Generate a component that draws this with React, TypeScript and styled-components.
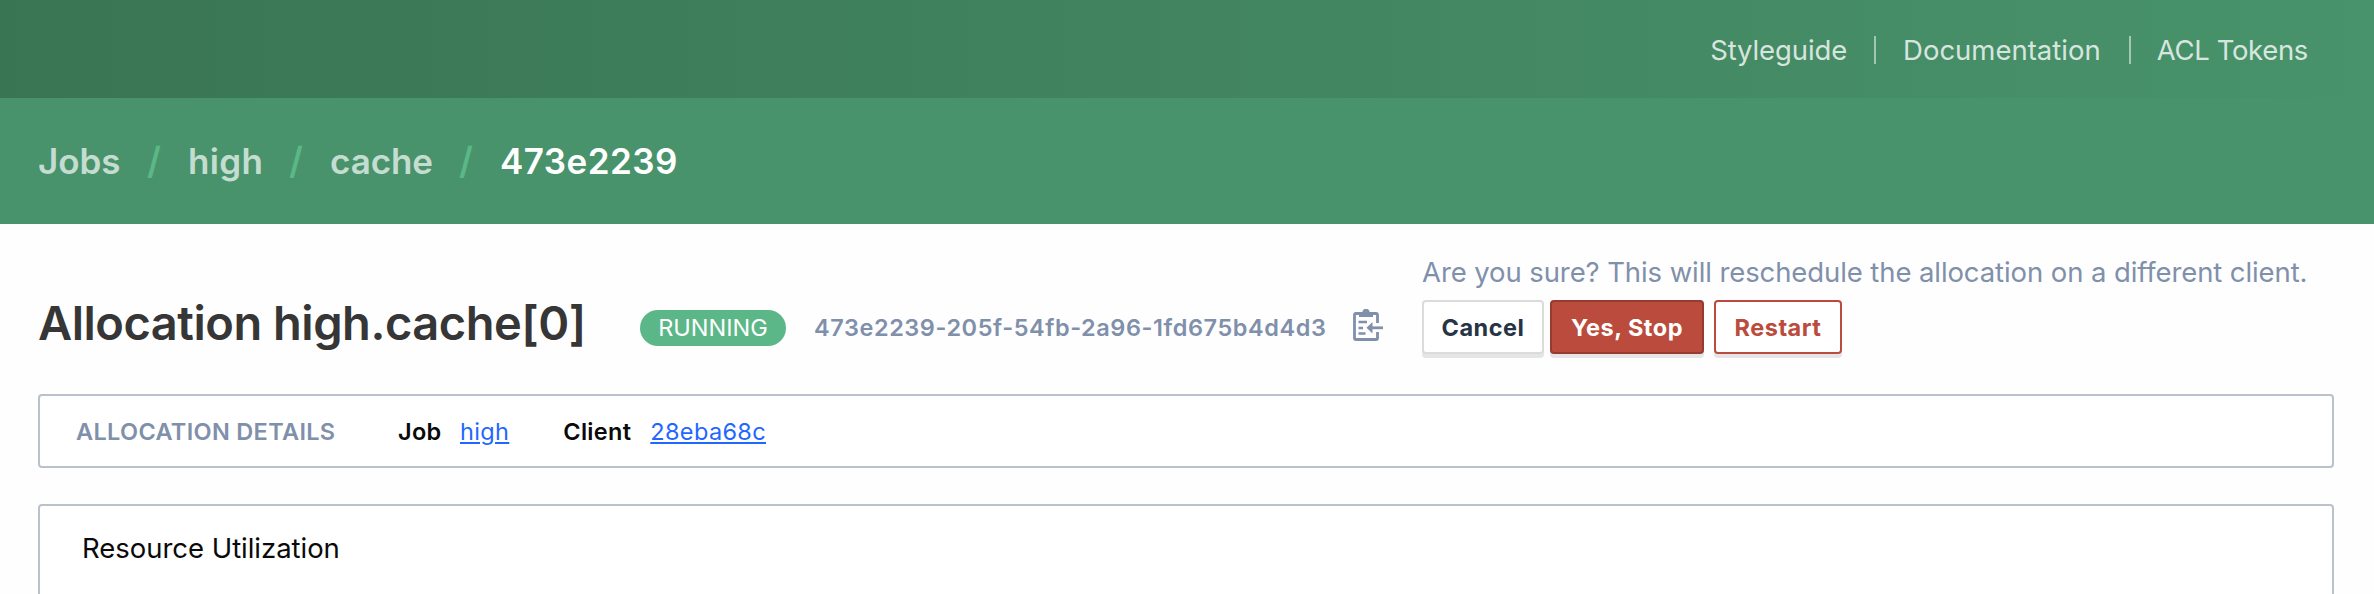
import React from "react";
import styled, { createGlobalStyle } from "styled-components";

const GlobalStyle = createGlobalStyle`
  *, *::before, *::after { box-sizing: border-box; }
  body {
    margin: 0;
    overflow: hidden;
    background: #fefefe;
    color: #0a0a0a;
    font-family: Inter, "Liberation Sans", sans-serif;
  }
  a { color: inherit; text-decoration: none; }
`;

const Page = styled.div`
  display: flex;
  flex-direction: column;
  height: 594px;
  overflow: hidden;
`;

const Navbar = styled.header`
  display: flex;
  flex: none;
  justify-content: flex-end;
  align-items: center;
  height: 98px;
  padding: 2px 66px 0 0;
  background: linear-gradient(to right, #3a7553, #48936b);
`;

const NavLink = styled.a<{ $tracking?: number }>`
  padding: 0 28px 0 27px;
  font-size: 27.5px;
  line-height: 34px;
  letter-spacing: ${(p) => p.$tracking ?? 0}px;
  color: rgba(255, 255, 255, 0.8);

  &:first-child { padding-right: 27px; }
  &:last-child { padding: 0 0 0 26px; }
`;

const NavDivider = styled.span`
  width: 2px;
  height: 28px;
  background: rgba(255, 255, 255, 0.5);
`;

const Breadcrumbs = styled.nav`
  display: flex;
  flex: none;
  align-items: center;
  height: 126px;
  padding-left: 38px;
  background: #48936b;
  font-size: 35px;
  font-weight: 600;
  line-height: 44px;
`;

const Crumb = styled.a<{ $width?: number; $current?: boolean; $tracking: number }>`
  flex: none;
  width: ${(p) => (p.$width ? `${p.$width}px` : "auto")};
  letter-spacing: ${(p) => p.$tracking}px;
  color: ${(p) => (p.$current ? "#ffffff" : "rgba(255, 255, 255, 0.7)")};
`;

const Slash = styled.span`
  flex: none;
  width: 41px;
  font-size: 37px;
  color: #5bb787;
`;

const Content = styled.main`
  display: flex;
  flex: none;
  flex-direction: column;
  padding: 32px 40px 0 38px;
`;

const TitleBar = styled.div`
  display: flex;
  align-items: flex-start;
  height: 138px;
`;

const Title = styled.h1`
  flex: none;
  width: 602px;
  margin: 37px 0 0;
  font-size: 47px;
  font-weight: 600;
  line-height: 60px;
  letter-spacing: -0.48px;
  color: #363636;
  white-space: nowrap;
`;

const Badge = styled.span`
  flex: none;
  width: 146px;
  height: 36px;
  margin-top: 54px;
  border-radius: 18px;
  background: #5bb787;
  color: #ffffff;
  font-size: 23.5px;
  line-height: 35px;
  text-align: center;
`;

const Hash = styled.span`
  flex: none;
  width: 539px;
  margin: 54px 0 0 28px;
  color: #8090ab;
  font-size: 23.5px;
  font-weight: 600;
  line-height: 36px;
  letter-spacing: 0.57px;
`;

const CopyIcon = styled.svg`
  flex: none;
  width: 30px;
  height: 32px;
  margin: 53px 39px 0 0;
`;

const Confirmation = styled.div`
  display: flex;
  flex-direction: column;
`;

const Prompt = styled.p`
  margin: 0;
  color: #8090ab;
  font-size: 27.5px;
  line-height: 32px;
  letter-spacing: -0.095px;
  white-space: nowrap;
`;

const Buttons = styled.div`
  display: flex;
  margin-top: 12px;
`;

type Tone = "plain" | "danger" | "dangerOutline";

const tones: Record<Tone, string> = {
  plain: "background: #ffffff; border-color: #dbdbdb; color: #263445;",
  danger: "background: #bb4b3d; border-color: #953b30; color: #ffffff;",
  dangerOutline: "background: #ffffff; border-color: #bb4b3d; color: #bb4b3d;",
};

const Button = styled.button<{ $tone: Tone; $width: number; $gap?: number }>`
  width: ${(p) => p.$width}px;
  height: 54px;
  margin: 0 ${(p) => p.$gap ?? 0}px 0 0;
  padding: 2px 0 0;
  border: 2px solid;
  border-radius: 4px;
  box-shadow: 0 4px 0 0 rgba(10, 10, 10, 0.1);
  font: 700 23.5px/48px Inter, "Liberation Sans", sans-serif;
  letter-spacing: 0.5px;
  white-space: nowrap;
  ${(p) => tones[p.$tone]}
`;

const Box = styled.section`
  border: 2px solid #bac1cc;
  border-radius: 4px;
  background: #ffffff;
`;

const DetailsBox = styled(Box)`
  display: flex;
  align-items: center;
  height: 74px;
  padding: 1px 0 0 36px;
  font-size: 23.5px;
  line-height: 34px;
`;

const DetailsHeading = styled.span`
  width: 322px;
  color: #8090ab;
  font-weight: 600;
  letter-spacing: 0.33px;
`;

const Term = styled.span<{ $width: number }>`
  width: ${(p) => p.$width}px;
  font-weight: 600;
  letter-spacing: 0.3px;
`;

const DetailLink = styled.a`
  color: #1f67ff;
  letter-spacing: 0.35px;
  text-decoration: underline;
  text-decoration-thickness: 2px;
  text-underline-offset: 2px;

  & + span { margin-left: 54px; }
`;

const UtilizationBox = styled(Box)`
  height: 300px;
  margin-top: 36px;
  padding: 25px 0 0 42px;
  font-size: 27.5px;
  line-height: 34px;
  letter-spacing: -0.03px;
`;

export default function App() {
  return (
    <Page>
      <GlobalStyle />
      <Navbar>
        <NavLink href="#" $tracking={-0.12}>Styleguide</NavLink>
        <NavDivider />
        <NavLink href="#" $tracking={0}>Documentation</NavLink>
        <NavDivider />
        <NavLink href="#" $tracking={-0.35}>ACL Tokens</NavLink>
      </Navbar>
      <Breadcrumbs>
        <Crumb href="#" $width={109} $tracking={-0.1}>Jobs</Crumb>
        <Slash>/</Slash>
        <Crumb href="#" $width={101} $tracking={0.3}>high</Crumb>
        <Slash>/</Slash>
        <Crumb href="#" $width={129} $tracking={-0.1}>cache</Crumb>
        <Slash>/</Slash>
        <Crumb href="#" $current $tracking={0.47}>473e2239</Crumb>
      </Breadcrumbs>
      <Content>
        <TitleBar>
          <Title>Allocation high.cache[0]</Title>
          <Badge>RUNNING</Badge>
          <Hash>473e2239-205f-54fb-2a96-1fd675b4d4d3</Hash>
          <CopyIcon viewBox="0 0 30 32" fill="none" stroke="#8090ab">
            <path
              d="M24.5 14V6a1.5 1.5 0 0 0-1.5-1.5H3A1.5 1.5 0 0 0 1.5 6v23A1.5 1.5 0 0 0 3 30.5h20a1.5 1.5 0 0 0 1.5-1.5v-6"
              strokeWidth="2.8"
            />
            <path
              d="M6 3.5h3.3a3.7 3.7 0 0 1 7.4 0H20V8H6zM13 2.8a1.5 1.5 0 1 0 0 3 1.5 1.5 0 0 0 0-3z"
              fill="#8090ab"
              fillRule="evenodd"
              stroke="none"
            />
            <path d="M5.5 13H14M5.5 19H10M5.5 24.5H12.5" strokeWidth="2.6" />
            <path d="M18 18.8H30" strokeWidth="2.8" />
            <path d="M13.5 18.8L19.5 13V24.6Z" fill="#8090ab" stroke="none" />
          </CopyIcon>
          <Confirmation>
            <Prompt>Are you sure? This will reschedule the allocation on a different client.</Prompt>
            <Buttons>
              <Button $tone="plain" $width={122} $gap={6}>Cancel</Button>
              <Button $tone="danger" $width={154} $gap={10}>Yes, Stop</Button>
              <Button $tone="dangerOutline" $width={128}>Restart</Button>
            </Buttons>
          </Confirmation>
        </TitleBar>
        <DetailsBox>
          <DetailsHeading>ALLOCATION DETAILS</DetailsHeading>
          <Term $width={62}>Job</Term>
          <DetailLink href="#">high</DetailLink>
          <Term $width={87}>Client</Term>
          <DetailLink href="#">28eba68c</DetailLink>
        </DetailsBox>
        <UtilizationBox>Resource Utilization</UtilizationBox>
      </Content>
    </Page>
  );
}
